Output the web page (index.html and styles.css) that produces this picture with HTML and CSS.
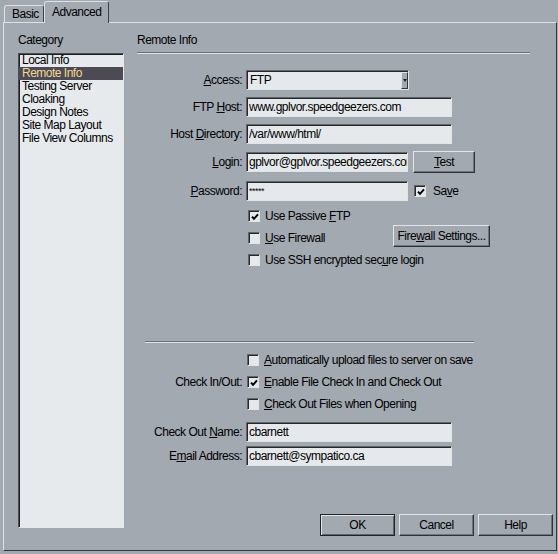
FILE: index.html
```html
<!DOCTYPE html>
<html lang="en">
<head>
    <meta charset="UTF-8">
    <title>Site Definition</title>
    <link rel="stylesheet" href="styles.css">
</head>
<body>
    <div class="dialog">
        <div class="tabs">
            <div class="tab">Basic</div>
            <div class="tab tab-active">Advanced</div>
        </div>

        <div class="panel">
            <div class="sidebar">
                <div class="caption">Category</div>
                <ul class="category-list">
                    <li>Local Info</li>
                    <li class="selected">Remote Info</li>
                    <li>Testing Server</li>
                    <li>Cloaking</li>
                    <li>Design Notes</li>
                    <li>Site Map Layout</li>
                    <li>File View Columns</li>
                </ul>
            </div>

            <div class="content">
                <div class="caption">Remote Info</div>
                <div class="groove title-line"></div>

                <div class="form-grid">
                    <label><u>A</u>ccess:</label>
                    <div class="select">
                        <span>FTP</span>
                        <span class="select-arrow"></span>
                    </div>

                    <label>FTP <u>H</u>ost:</label>
                    <input class="field field-wide" type="text" value="www.gplvor.speedgeezers.com">

                    <label>Host <u>D</u>irectory:</label>
                    <input class="field field-wide" type="text" value="/var/www/html/">

                    <label><u>L</u>ogin:</label>
                    <div class="inline">
                        <input class="field field-short" type="text" value="gplvor@gplvor.speedgeezers.com">
                        <button class="btn btn-test"><u>T</u>est</button>
                    </div>

                    <label><u>P</u>assword:</label>
                    <div class="inline">
                        <input class="field field-short field-secret" type="text" value="*****">
                        <span class="check-row save">
                            <span class="check"><svg viewBox="0 0 8 8"><path d="M1 3.6 L3 5.8 L7 1.4"/></svg></span>
                            <span>Sa<u>v</u>e</span>
                        </span>
                    </div>
                </div>

                <div class="options">
                    <div class="check-row">
                        <span class="check"><svg viewBox="0 0 8 8"><path d="M1 3.6 L3 5.8 L7 1.4"/></svg></span>
                        <span>Use Passive <u>F</u>TP</span>
                    </div>
                    <div class="check-row firewall-row">
                        <span class="check"></span>
                        <span><u>U</u>se Firewall</span>
                        <button class="btn btn-firewall">Fire<u>w</u>all Settings...</button>
                    </div>
                    <div class="check-row">
                        <span class="check"></span>
                        <span>Use SSH encrypted sec<u>u</u>re login</span>
                    </div>
                </div>

                <div class="groove divider"></div>

                <div class="checkout-grid">
                    <div class="check-row col-2">
                        <span class="check"></span>
                        <span><u>A</u>utomatically upload files to server on save</span>
                    </div>

                    <label class="tall">Check In/Out:</label>
                    <div class="check-row">
                        <span class="check"><svg viewBox="0 0 8 8"><path d="M1 3.6 L3 5.8 L7 1.4"/></svg></span>
                        <span><u>E</u>nable File Check In and Check Out</span>
                    </div>

                    <div class="check-row col-2">
                        <span class="check"></span>
                        <span><u>C</u>heck Out Files when Opening</span>
                    </div>

                    <label>Check Out <u>N</u>ame:</label>
                    <input class="field field-wide" type="text" value="cbarnett">

                    <label>E<u>m</u>ail Address:</label>
                    <input class="field field-wide" type="text" value="cbarnett@sympatico.ca">
                </div>

                <div class="footer">
                    <button class="btn btn-default">OK</button>
                    <button class="btn">Cancel</button>
                    <button class="btn">Help</button>
                </div>
            </div>
        </div>
    </div>
</body>
</html>
```

FILE: styles.css
```css
body {
    margin: 0;
    background-color: #a2a9b1;
    font-family: "Liberation Sans", Arial, sans-serif;
    font-size: 12px;
    letter-spacing: -0.5px;
    color: #000;
}
u {
    text-decoration: underline;
    text-underline-offset: 1px;
}
.dialog {
    width: 558px;
    height: 554px;
    display: flex;
    flex-direction: column;
}

/* tab strip */
.tabs {
    height: 22px;
    display: flex;
    align-items: flex-end;
    padding-left: 4px;
}
.tab {
    height: 17px;
    width: 40px;
    box-sizing: border-box;
    padding-left: 7px;
    line-height: 17px;
    border: 1px solid;
    border-color: #dde2e6 #3d4247 transparent #dde2e6;
    border-bottom: none;
    border-radius: 3px 3px 0 0;
}
.tab-active {
    position: relative;
    z-index: 1;
    width: 65px;
    height: 22px;
    margin-bottom: -1px;
    padding: 2px 0 0 7px;
    line-height: 17px;
    background-color: #a2a9b1;
}

/* main panel */
.panel {
    margin-left: 3px;
    width: 552px;
    height: 527px;
    border: 1px solid;
    border-color: #dde2e6 #33373c #33373c #dde2e6;
    display: flex;
}
.sidebar {
    width: 119px;
    padding-left: 14px;
}
.caption {
    margin-top: 10px;
    line-height: 14px;
}
.category-list {
    list-style: none;
    margin: 6px 0 0;
    padding: 0;
    width: 106px;
    height: 475px;
    box-sizing: border-box;
    background-color: #e6eaec;
    border: 1px solid;
    border-color: #4a4f55 #e4e8eb #e4e8eb #4a4f55;
    box-shadow: inset 1px 1px 0 #1c1f22;
}
.category-list li {
    line-height: 13px;
    padding-left: 3px;
    white-space: nowrap;
}
.category-list li.selected {
    background-color: #4c4b55;
    color: #f2d68a;
}

.content {
    flex: 1;
    display: flex;
    flex-direction: column;
}
.groove {
    height: 0;
    border-top: 1px solid #6a7077;
    border-bottom: 1px solid #e0e4e7;
}
.title-line {
    width: 393px;
    margin-top: 5px;
}

/* form */
.form-grid {
    margin-top: 16px;
    display: grid;
    grid-template-columns: 105px auto;
    column-gap: 4px;
    row-gap: 7px;
    align-items: center;
}
.form-grid label,
.checkout-grid label {
    text-align: right;
    white-space: nowrap;
}
.inline {
    display: flex;
    align-items: center;
}
.field {
    height: 20px;
    box-sizing: border-box;
    margin: 0;
    padding: 0 0 0 2px;
    font: inherit;
    letter-spacing: inherit;
    color: #000;
    background-color: #e5e9eb;
    border: 1px solid;
    border-color: #5f656b #e1e5e8 #e1e5e8 #5f656b;
    box-shadow: inset 1px 1px 0 #25282c;
    outline: none;
}
.field-wide {
    width: 206px;
}
.field-short {
    width: 162px;
}
.field-secret {
    font-size: 9px;
    letter-spacing: -0.5px;
}
.select {
    width: 163px;
    height: 20px;
    box-sizing: border-box;
    display: flex;
    align-items: center;
    justify-content: space-between;
    padding-left: 3px;
    background-color: #e5e9eb;
    border: 1px solid;
    border-color: #5f656b #e1e5e8 #e1e5e8 #5f656b;
    box-shadow: inset 1px 1px 0 #25282c;
}
.select-arrow {
    width: 7px;
    height: 17px;
    margin-top: 1px;
    box-sizing: border-box;
    background-color: #a2a9b1;
    border: 1px solid;
    border-color: #dfe3e6 #33373c #33373c #dfe3e6;
    display: flex;
    align-items: center;
    justify-content: center;
}
.select-arrow::after {
    content: "";
    border-left: 2px solid transparent;
    border-right: 2px solid transparent;
    border-top: 3px solid #222;
}

.btn {
    height: 22px;
    width: 75px;
    box-sizing: border-box;
    padding: 0;
    font: inherit;
    letter-spacing: inherit;
    color: #000;
    background-color: #a2a9b1;
    border: 1px solid;
    border-color: #e1e5e8 #2f3337 #2f3337 #e1e5e8;
    box-shadow: inset -1px -1px 0 #6f757c;
}
.btn-default {
    border-color: #202327;
    box-shadow: inset 1px 1px 0 #e1e5e8, inset -1px -1px 0 #5f656b;
}
.btn-test {
    width: 62px;
    margin-left: 5px;
}
.btn-firewall {
    width: 97px;
    margin-left: auto;
    align-self: flex-start;
    margin-top: -2px;
}

/* checkboxes */
.check-row {
    height: 22px;
    display: flex;
    align-items: center;
    white-space: nowrap;
}
.check {
    width: 12px;
    height: 12px;
    box-sizing: border-box;
    margin-right: 5px;
    background-color: #e5e9eb;
    border: 1px solid;
    border-color: #5f656b #e1e5e8 #e1e5e8 #5f656b;
    box-shadow: inset 1px 1px 0 #25282c;
    display: flex;
    align-items: center;
    justify-content: center;
}
.check svg {
    width: 8px;
    height: 8px;
    margin: 1px 0 0 1px;
}
.check svg path {
    fill: none;
    stroke: #000;
    stroke-width: 2;
}
.save {
    margin-left: 6px;
}
.save .check {
    margin-right: 7px;
}

.options {
    margin: 3px 0 0 110px;
}
.options .check-row {
    padding-left: 1px;
}
.firewall-row {
    width: 242px;
}
.divider {
    width: 329px;
    margin: 70px 0 0 8px;
}

.checkout-grid {
    margin-top: 6px;
    display: grid;
    grid-template-columns: 105px auto;
    grid-template-rows: 22px 22px 22px 27px 24px;
    column-gap: 4px;
    align-items: end;
}
.checkout-grid .check-row {
    padding-left: 1px;
}
.checkout-grid label {
    line-height: 20px;
}
.checkout-grid label.tall {
    line-height: 22px;
}
.col-2 {
    grid-column: 2;
}

.footer {
    margin-top: auto;
    margin-bottom: 14px;
    padding-right: 3px;
    display: flex;
    justify-content: flex-end;
    gap: 4px;
}
```
